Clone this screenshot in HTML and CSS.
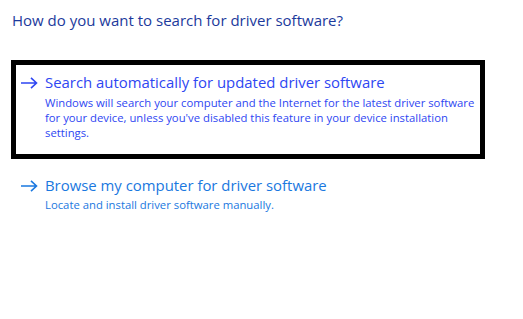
FILE: index.html
```html
<!DOCTYPE html>
<html lang="en">
<head>
    <meta charset="UTF-8">
    <title>Update Drivers</title>
    <link rel="stylesheet" href="styles.css">
</head>
<body>

    <h1 class="question">How do you want to search for driver software?</h1>

    <!-- Options -->
    <div class="option option-selected">
        <svg class="arrow" width="18" height="12" viewBox="0 0 18 12">
            <path d="M1 6 H16.5 M11 0.8 L16.5 6 L11 11.2" fill="none" stroke="currentColor" stroke-width="1.6"/>
        </svg>
        <div class="option-text">
            <div class="option-title">Search automatically for updated driver software</div>
            <div class="option-desc">Windows will search your computer and the Internet for the latest driver software<br>for your device, unless you've disabled this feature in your device installation<br>settings.</div>
        </div>
    </div>

    <div class="option option-plain">
        <svg class="arrow" width="18" height="12" viewBox="0 0 18 12">
            <path d="M1 6 H16.5 M11 0.8 L16.5 6 L11 11.2" fill="none" stroke="currentColor" stroke-width="1.6"/>
        </svg>
        <div class="option-text">
            <div class="option-title">Browse my computer for driver software</div>
            <div class="option-desc">Locate and install driver software manually.</div>
        </div>
    </div>

</body>
</html>
```

FILE: styles.css
```css
body {
    font-family: 'Open Sans', 'Noto Sans', sans-serif;
    margin: 0;
    padding: 0;
    background-color: #fff;
    width: 523px;
    height: 319px;
}

.question {
    font-size: 15px;
    font-weight: normal;
    color: #1c3a9c;
    margin: 0;
    padding: 10px 0 0 12px;
    height: 60px;
    box-sizing: border-box;
}

.option {
    display: flex;
    align-items: flex-start;
    margin-left: 11px;
    width: 474px;
    box-sizing: border-box;
}

.option-selected {
    border: 5px solid #000;
    height: 99px;
    padding: 7px 0 0 4px;
    color: #2e46f2;
}

.option-plain {
    margin-top: 11px;
    padding: 5px 0 0 9px;
    color: #1a78e0;
}

.arrow {
    flex: none;
    margin-top: 5px;
    width: 18px;
    height: 12px;
}

.option-text {
    margin-left: 7px;
    white-space: nowrap;
}

.option-title {
    font-size: 14.9px;
    line-height: 20px;
}

.option-desc {
    font-size: 11.3px;
    line-height: 15px;
    margin-top: 2px;
}

.option-selected .option-desc {
    margin-top: 3px;
}
```
